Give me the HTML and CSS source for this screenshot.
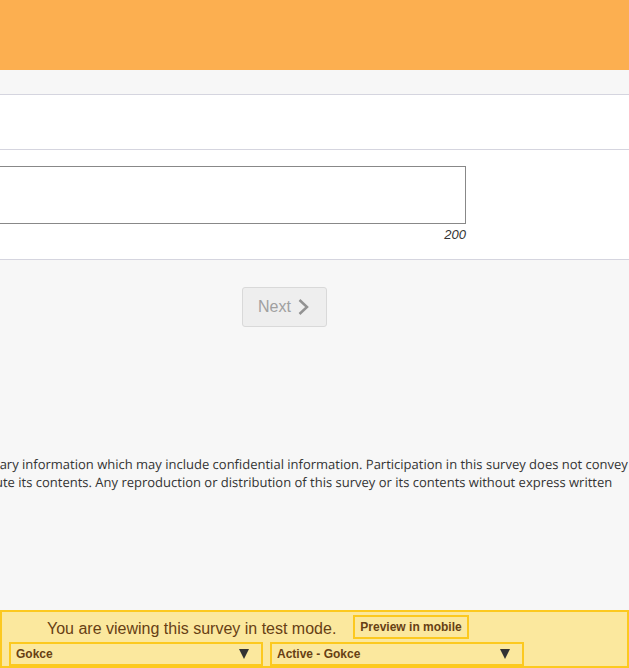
FILE: index.html
```html
<!DOCTYPE html>
<html lang="en">
<head>
<meta charset="utf-8">
<meta name="viewport" content="width=device-width, initial-scale=1">
<title>Survey</title>
<link rel="stylesheet" href="styles.css">
</head>
<body>
<header class="banner"></header>
<main class="survey">
  <form class="question">
    <div class="question-title"></div>
    <div class="question-body">
      <div class="answer">
        <textarea class="answer-box" aria-label="Your answer" aria-describedby="left"></textarea>
        <span class="counter" id="left">200</span>
      </div>
    </div>
    <div class="actions">
      <button class="next" type="button" disabled>
        <span>Next</span>
        <svg class="chevron" viewBox="0 0 12 18" aria-hidden="true"><path d="M1.5 2 9 9 1.5 16"/></svg>
      </button>
    </div>
  </form>
  <p class="legal">tary information which may include confidential information. Participation in this survey does not convey a<br>ute its contents. Any reproduction or distribution of this survey or its contents without express written</p>
</main>
<footer class="test-bar">
  <div class="test-row test-row-top">
    <span class="test-message">You are viewing this survey in test mode.</span>
    <button class="preview" type="button">Preview in mobile</button>
  </div>
  <div class="test-row">
    <div class="picker">
      <select aria-label="Respondent"><option>Gokce</option></select>
      <svg class="arrow" viewBox="0 0 10 10" aria-hidden="true"><path d="M0 0H10L5 10Z"/></svg>
    </div>
    <div class="picker">
      <select aria-label="Status"><option>Active - Gokce</option></select>
      <svg class="arrow" viewBox="0 0 10 10" aria-hidden="true"><path d="M0 0H10L5 10Z"/></svg>
    </div>
  </div>
</footer>
</body>
</html>
```
FILE: styles.css
```css
* {
  box-sizing: border-box;
}

body {
  display: flex;
  flex-direction: column;
  min-height: 100vh;
  margin: 0;
  overflow-x: hidden;
  background: #f7f7f7;
  color: #333;
  font-family: "Liberation Sans", Arial, sans-serif;
}

.banner {
  height: 70px;
  background: #fcaf50;
}

.survey {
  flex: 1;
  padding-top: 24px;
  overflow: hidden;
}

.question-title {
  height: 56px;
  border: solid #d5d5df;
  border-width: 1px 0;
  background: #fff;
}

.question-body {
  padding: 16px 0;
  border-bottom: 1px solid #d5d5df;
  background: #fff;
}

.answer {
  display: flex;
  flex-direction: column;
  width: 466px;
  max-width: 100%;
}

.answer-box {
  height: 58px;
  border: 1px solid #888;
  border-left: 0;
  border-radius: 0;
  background: #fff;
  resize: none;
}

.counter {
  padding-top: 3px;
  font-size: 13px;
  font-style: italic;
  line-height: 16px;
  text-align: right;
}

.actions {
  padding: 27px 0 0 242px;
}

.next {
  display: flex;
  align-items: center;
  gap: 7px;
  height: 40px;
  padding: 0 16px 0 15px;
  border: 1px solid #d9d9d9;
  border-radius: 3px;
  background: #eee;
  color: #a0a0a0;
  font-family: "Liberation Sans", Arial, sans-serif;
  font-size: 16px;
}

.chevron {
  width: 12px;
  height: 18px;
  fill: none;
  stroke: #929292;
  stroke-width: 2.5;
}

.legal {
  margin: 128px 0 0 -5px;
  font-family: "Open Sans", sans-serif;
  font-size: 13px;
  line-height: 18px;
  text-rendering: geometricPrecision;
  white-space: nowrap;
}

.test-bar {
  padding: 3px 7px 0;
  border: 2px solid #fcc91f;
  background: #fbe89e;
  color: #674014;
}

.test-row {
  display: flex;
  gap: 7px;
}

.test-row-top {
  align-items: flex-end;
  gap: 17px;
  padding: 0 0 3px 38px;
}

.test-message {
  font-size: 16px;
  line-height: 20px;
}

.preview,
.picker select {
  height: 24px;
  border: 2px solid #fcc91f;
  border-radius: 0;
  background: #fbe89e;
  color: #674014;
  font: bold 12px "Liberation Sans", Arial, sans-serif;
}

.preview {
  padding: 0 5px;
}

.picker {
  position: relative;
  width: 254px;
}

.picker select {
  width: 100%;
  padding: 0 5px;
  appearance: none;
}

.arrow {
  position: absolute;
  top: 7px;
  right: 14px;
  width: 10px;
  height: 10px;
  fill: #333;
  pointer-events: none;
}
```
